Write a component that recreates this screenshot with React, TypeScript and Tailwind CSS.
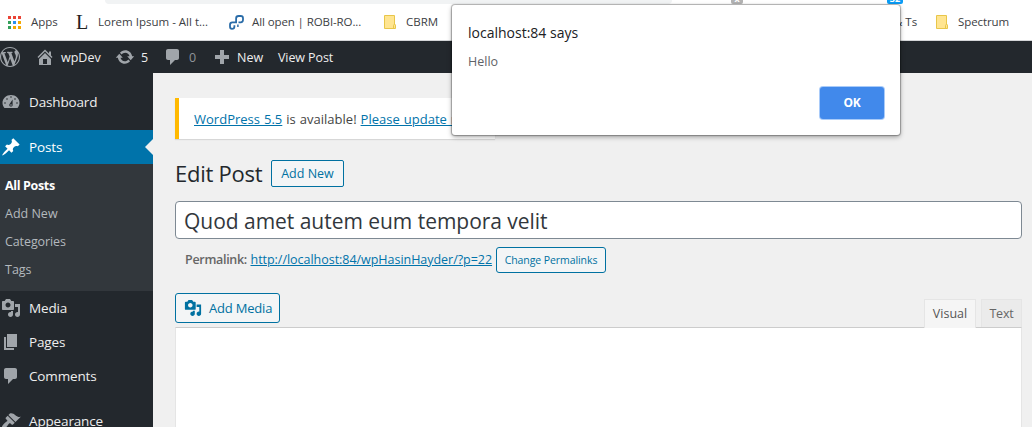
import type { ReactNode } from "react";

const paths = {
  wordpress:
    "M20 10c0-5.51-4.49-10-10-10C4.48 0 0 4.49 0 10c0 5.52 4.48 10 10 10 5.51 0 10-4.48 10-10zM7.78 15.37L4.37 6.22c.55-.02 1.17-.08 1.17-.08.5-.06.44-1.13-.06-1.11 0 0-1.45.11-2.37.11-.18 0-.37 0-.58-.01C4.12 2.69 6.87 1.11 10 1.11c2.33 0 4.45.87 6.05 2.34-.68-.11-1.65.39-1.65 1.58 0 .74.45 1.36.9 2.1.35.61.55 1.36.55 2.46 0 1.49-1.4 5-1.4 5l-3.03-8.37c.54-.02.82-.17.82-.17.5-.05.44-1.25-.06-1.22 0 0-1.44.12-2.38.12-.87 0-2.33-.12-2.33-.12-.5-.03-.56 1.2-.06 1.22l.92.08 1.26 3.41zM17.41 10c.24-.64.74-1.87.43-4.25.7 1.29 1.05 2.71 1.05 4.25 0 3.29-1.73 6.24-4.4 7.78.97-2.59 1.94-5.2 2.92-7.78zM6.1 18.09C3.12 16.65 1.11 13.53 1.11 10c0-1.3.23-2.48.72-3.59C3.25 10.3 4.67 14.2 6.1 18.09zm4.03-6.63l2.58 6.98c-.86.29-1.76.45-2.71.45-.79 0-1.57-.11-2.29-.33.81-2.38 1.62-4.74 2.42-7.1z",
  home: "M16 8.5l1.53 1.53-1.06 1.06L10 4.6l-6.47 6.49-1.06-1.06L10 2.5l4 4v-2h2v4zm-6-2.46l6 5.99V18H4v-5.97zM12 17v-5H8v5h4z",
  update:
    "M10.2 3.28c3.53 0 6.43 2.61 6.92 6h2.08l-3.5 4-3.5-4h2.32c-.45-1.97-2.21-3.45-4.32-3.45-1.45 0-2.73.71-3.54 1.78L4.95 5.66C6.23 4.2 8.11 3.28 10.2 3.28zm-.4 13.44c-3.52 0-6.43-2.61-6.92-6H.8l3.5-4c1.17 1.33 2.33 2.67 3.5 4H5.48c.45 1.97 2.21 3.45 4.32 3.45 1.45 0 2.73-.71 3.54-1.78l1.71 1.95c-1.28 1.46-3.15 2.38-5.25 2.38z",
  comments:
    "M5 2h9c1.1 0 2 .9 2 2v7c0 1.1-.9 2-2 2h-2l-5 5v-5H5c-1.1 0-2-.9-2-2V4c0-1.1.9-2 2-2z",
  plus: "M8 3h4v5h5v4h-5v5H8v-5H3V8h5z",
  dashboard:
    "M3.5 16h13c1.1-1.37 2-3.11 2-5 0-4.5-3.8-8-8.5-8s-8.5 3.5-8.5 8c0 1.89.9 3.63 2 5zM10 4.2a.8.8 0 1 1 0 1.6.8.8 0 0 1 0-1.6zM6 6.2a.8.8 0 1 1 0 1.6.8.8 0 0 1 0-1.6zm8 0a.8.8 0 1 1 0 1.6.8.8 0 0 1 0-1.6zm-5.2 5.5L11.6 7.5v5.5c0 .9-.7 1.6-1.6 1.6s-1.7-.7-1.7-1.6c0-.5.2-1 .5-1.3zM4 10.2a.8.8 0 1 1 0 1.6.8.8 0 0 1 0-1.6zm12 0a.8.8 0 1 1 0 1.6.8.8 0 0 1 0-1.6zM10.8 13a.8.8 0 1 0-1.6 0 .8.8 0 0 0 1.6 0z",
  pin: "M10.44 3.02l1.82-1.82 6.36 6.35-1.83 1.82c-1.05-.68-2.48-.57-3.41.36l-.75.75c-.92.93-1.04 2.35-.35 3.41l-1.83 1.82-2.41-2.41-2.8 2.79c-.42.42-3.38 2.71-3.8 2.29s1.86-3.39 2.28-3.81l2.79-2.79L4.1 9.36l1.83-1.82c1.05.69 2.48.57 3.4-.36l.75-.75c.93-.92 1.05-2.35.36-3.41z",
  media:
    "M13 11V4c0-.55-.45-1-1-1h-1.67L9 1H5L3.67 3H2c-.55 0-1 .45-1 1v7c0 .55.45 1 1 1h10c.55 0 1-.45 1-1zM7 4.5c1.38 0 2.5 1.12 2.5 2.5S8.38 9.5 7 9.5 4.5 8.38 4.5 7 5.62 4.5 7 4.5zM14 6h5v10.5c0 1.38-1.12 2.5-2.5 2.5S14 17.88 14 16.5s1.12-2.5 2.5-2.5c.17 0 .34.02.5.05V9h-3V6zm-4 8.05V13h2v3.5c0 1.38-1.12 2.5-2.5 2.5S7 17.88 7 16.5 8.12 14 9.5 14c.17 0 .34.02.5.05z",
  pages: "M6 15V2h10v13H6zm-1 1h8v2H3V5h2v11z",
  appearance:
    "M14.48 11.06L7.41 3.99l1.5-1.5c.5-.56 2.3-.47 3.51.32 1.21.8 1.43 1.28 2.91 2.1 1.18.64 2.45 1.26 4.45.85zm-.71.71L6.7 4.7 4.93 6.47c-.39.39-.39 1.02 0 1.41l1.06 1.06c.39.39.39 1.03 0 1.42-.6.6-1.43 1.11-2.21 1.69-.35.26-.7.53-1.01.84C1.43 14.23.4 16.08 1.4 17.07c.99 1 2.84-.03 4.18-1.36.31-.31.58-.66.85-1.02.57-.78 1.08-1.61 1.69-2.21.39-.39 1.02-.39 1.41 0l1.06 1.06c.39.39 1.02.39 1.41 0z",
};

function Icon({ name, className }: { name: keyof typeof paths; className: string }) {
  return (
    <svg viewBox="0 0 20 20" fill="currentColor" fillRule={name === "dashboard" ? "evenodd" : "nonzero"} className={`shrink-0 ${className}`}>
      <path d={paths[name]} />
    </svg>
  );
}

function AppsIcon() {
  const colors = ["#ea4335", "#ea4335", "#ea4335", "#34a05a", "#2a8ff0", "#f5a800", "#34a05a", "#f5a800", "#f5a800"];
  return (
    <svg viewBox="0 0 13 13" className="h-[13px] w-[13px] shrink-0">
      {colors.map((c, i) => (
        <rect key={i} x={(i % 3) * 5} y={Math.floor(i / 3) * 5} width="3" height="3" fill={c} />
      ))}
    </svg>
  );
}

function ChainIcon() {
  return (
    <svg viewBox="0 0 15 15" className="h-[15px] w-[15px] shrink-0" fill="none" stroke="#2a6ca8" strokeWidth="1.8">
      <path d="M9.5 7.3H11.6Q14 7.3 14 4.8V3.2Q14 1 11.6 1H9.6Q7.1 1 7.1 3.4V7.3H3.4Q1 7.3 1 9.8V11.6Q1 13.9 3 13.9Q5.4 13.9 5.4 11.5V10.2" />
      <path d="M8.9 9.4V12" strokeWidth="1.5" />
    </svg>
  );
}

function FolderIcon() {
  return (
    <svg viewBox="0 0 12 14" className="h-[14px] w-[12px] shrink-0">
      <path d="M.5.5H10.5V9.5L11.5 10V13.5H.5z" fill="#ffe591" stroke="#e8c64a" />
      <path d="M9.5 13V10.5Q9.5 9.5 10.5 9.5T11.5 10.5V13" fill="#ffe591" stroke="#e8c64a" />
    </svg>
  );
}

function Menu({ icon, active, children }: { icon: keyof typeof paths; active?: boolean; children: ReactNode }) {
  return (
    <div className={`relative flex h-[34px] shrink-0 items-center pl-px text-[13.5px] tracking-[-0.15px] ${active ? "bg-[#0073aa] text-white" : "text-[#eee]"}`}>
      <Icon name={icon} className={`mr-2 h-5 w-5 ${active ? "text-white" : "text-[#a0a5aa]"}`} />
      {children}
      {active && (
        <svg viewBox="0 0 8 16" className="absolute right-0 top-[9px] h-4 w-2">
          <path d="M8 0V16L0 8z" fill="#f0f0f0" />
        </svg>
      )}
    </div>
  );
}

export default function App() {
  return (
    <div className="relative flex h-[427px] w-[1032px] flex-col overflow-hidden bg-[#f0f0f0] font-['Open_Sans',sans-serif] text-[#444]">
      <div className="h-1 shrink-0 bg-white pl-[105px]">
        <div className="h-1 w-[567px] rounded-b-[8px] bg-[#f1f3f4]" />
      </div>
      <div className="flex h-[37px] shrink-0 items-center border-b border-[#d4d6d8] bg-white pl-2 text-[11.5px] text-[#3c4043]">
        <AppsIcon />
        <span className="ml-[10px] w-[45px]">Apps</span>
        <span className="w-[12px] font-['Liberation_Serif',serif] text-[20px] leading-none text-[#222]">L</span>
        <span className="ml-[10px] w-[131px] whitespace-nowrap">Lorem Ipsum - All t...</span>
        <ChainIcon />
        <span className="ml-2 w-[132px] whitespace-nowrap tracking-[-0.1px]">All open | ROBI-RO...</span>
        <FolderIcon />
        <span className="ml-[10px] w-[488px]">CBRM</span>
        <span className="w-[42px] whitespace-nowrap">&amp; Ts</span>
        <FolderIcon />
        <span className="ml-[10px] tracking-[-0.1px]">Spectrum</span>
      </div>
      <div className="flex h-8 shrink-0 items-center bg-[#23282d] text-[12.5px] text-[#eee]">
        <Icon name="wordpress" className="h-5 w-5 text-[#a0a5aa]" />
        <Icon name="home" className="ml-[15px] h-5 w-5 text-[#a0a5aa]" />
        <span className="ml-[6px] w-[54px] pt-0.5">wpDev</span>
        <Icon name="update" className="h-5 w-5 text-[#a0a5aa]" />
        <span className="ml-[6px] w-[22px] pt-0.5">5</span>
        <Icon name="comments" className="h-5 w-5 text-[#a0a5aa]" />
        <span className="ml-[6px] w-[23px] pt-0.5 text-[#8f9499]">0</span>
        <Icon name="plus" className="h-5 w-5 text-[#a0a5aa]" />
        <span className="ml-[5px] w-[41px] pt-0.5">New</span>
        <span className="pt-0.5 tracking-[-0.1px]">View Post</span>
      </div>
      <div className="flex min-h-0 flex-1">
        <nav className="flex w-[153px] shrink-0 flex-col bg-[#23282d] pt-3">
          <Menu icon="dashboard">Dashboard</Menu>
          <div className="h-[11px] shrink-0" />
          <Menu icon="pin" active>Posts</Menu>
          <div className="flex h-[127px] shrink-0 flex-col bg-[#32373c] pl-[5px] pt-2 text-[12.5px] leading-7 text-[#b4b9be]">
            <span className="font-bold tracking-[-0.35px] text-white">All Posts</span>
            <span>Add New</span>
            <span className="tracking-[-0.1px]">Categories</span>
            <span>Tags</span>
          </div>
          <Menu icon="media">Media</Menu>
          <Menu icon="pages">Pages</Menu>
          <Menu icon="comments">Comments</Menu>
          <div className="h-[11px] shrink-0" />
          <Menu icon="appearance">Appearance</Menu>
        </nav>
        <main className="flex flex-1 flex-col pl-[22px] pr-[10px] pt-[25px]">
          <div className="flex h-[41px] w-[320px] shrink-0 items-center border-l-4 border-[#ffb900] bg-white pl-[15px] pt-0.5 text-[13px] shadow-[0_1px_1px_rgba(0,0,0,0.1)]">
            <p className="whitespace-nowrap tracking-[0.01px] [word-spacing:0.6px]">
              <span className="text-[#0073aa] underline">WordPress 5.5</span> is available! <span className="text-[#0073aa] underline">Please update now</span>
            </p>
          </div>
          <div className="mt-[21px] flex h-[27px] shrink-0 items-center">
            <h1 className="w-24 whitespace-nowrap text-[22px] tracking-[-0.25px] text-[#23282d]">Edit Post</h1>
            <button className="h-[27px] w-[73px] rounded-[2px] border border-[#0071a1] bg-[#f3f5f6] pt-0.5 text-[12.5px] font-medium text-[#0071a1]">Add New</button>
          </div>
          <div className="mt-[14px] flex h-[38px] shrink-0 items-center rounded border border-[#7e8993] bg-white pl-2 pt-[3px] text-[21px] tracking-[-0.03px] text-[#32373c]">
            Quod amet autem eum tempora velit
          </div>
          <div className="mt-2 flex h-[26px] shrink-0 items-center whitespace-nowrap pl-[10px] text-[12.5px] text-[#666]">
            <strong className="w-[65.5px] font-semibold tracking-[-0.3px]">Permalink:</strong>
            <span className="w-[245.5px] tracking-[-0.03px] text-[#0073aa] underline">http://localhost:84/wpHasinHayder/?p=22</span>
            <button className="h-[26px] w-[110px] rounded-[3px] border border-[#0071a1] bg-[#f3f5f6] pt-0.5 text-[10.5px] tracking-[-0.08px] text-[#0071a1]">Change Permalinks</button>
          </div>
          <div className="mt-5 flex h-[34px] shrink-0 items-start justify-between">
            <button className="flex h-[30px] w-[105px] items-center whitespace-nowrap rounded-[3px] border border-[#0071a1] bg-[#f3f5f6] pl-2 text-[13px] tracking-[-0.2px] text-[#0071a1]">
              <Icon name="media" className="mr-[7px] h-[18px] w-[18px]" />
              <span className="pt-0.5">Add Media</span>
            </button>
            <div className="relative z-10 mt-[6px] flex gap-[5px] text-[12.5px] text-[#555]">
              <div className="flex h-[29px] w-[52px] items-center justify-center border border-b-0 border-[#e5e5e5] bg-[#f5f5f5]">Visual</div>
              <div className="flex h-[28px] w-[41px] items-center justify-center border border-b-0 border-[#e5e5e5] bg-[#ebebeb] pt-0.5 tracking-[-0.2px] text-[#666]">Text</div>
            </div>
          </div>
          <div className="flex-1 border-x border-t border-[#e5e5e5] border-t-[#ccc] bg-white" />
        </main>
      </div>

      <div className="absolute left-[731px] top-[-9px] flex h-[13px] w-3 items-end justify-center rounded-[2px] bg-[#b3b3b3] text-[9px] font-bold leading-[10px] text-white">x</div>
      <div className="absolute left-[887px] top-[-9px] flex h-[13px] w-4 items-end justify-center rounded-[2px] bg-[#0a9cf5] text-[9px] font-bold leading-[11px] text-white">32</div>
      <div className="absolute left-[452px] top-[5px] flex h-[130px] w-[448px] flex-col rounded-[3px] bg-white pl-4 pr-4 pt-[17px] shadow-[0_0_1px_1px_rgba(0,0,0,0.28),0_2px_5px_rgba(0,0,0,0.35)]">
        <div className="text-[14px] leading-[22px] text-[#202124]">localhost:84 says</div>
        <div className="mt-2 text-[12.5px] leading-5 text-[#5f6368]">Hello</div>
        <button className="mt-[15px] h-8 w-16 self-end rounded-[3px] bg-[#4189eb] text-[12px] font-bold tracking-[-0.3px] text-white shadow-[0_0_0_1px_#a9cbf9]">OK</button>
      </div>
    </div>
  );
}
